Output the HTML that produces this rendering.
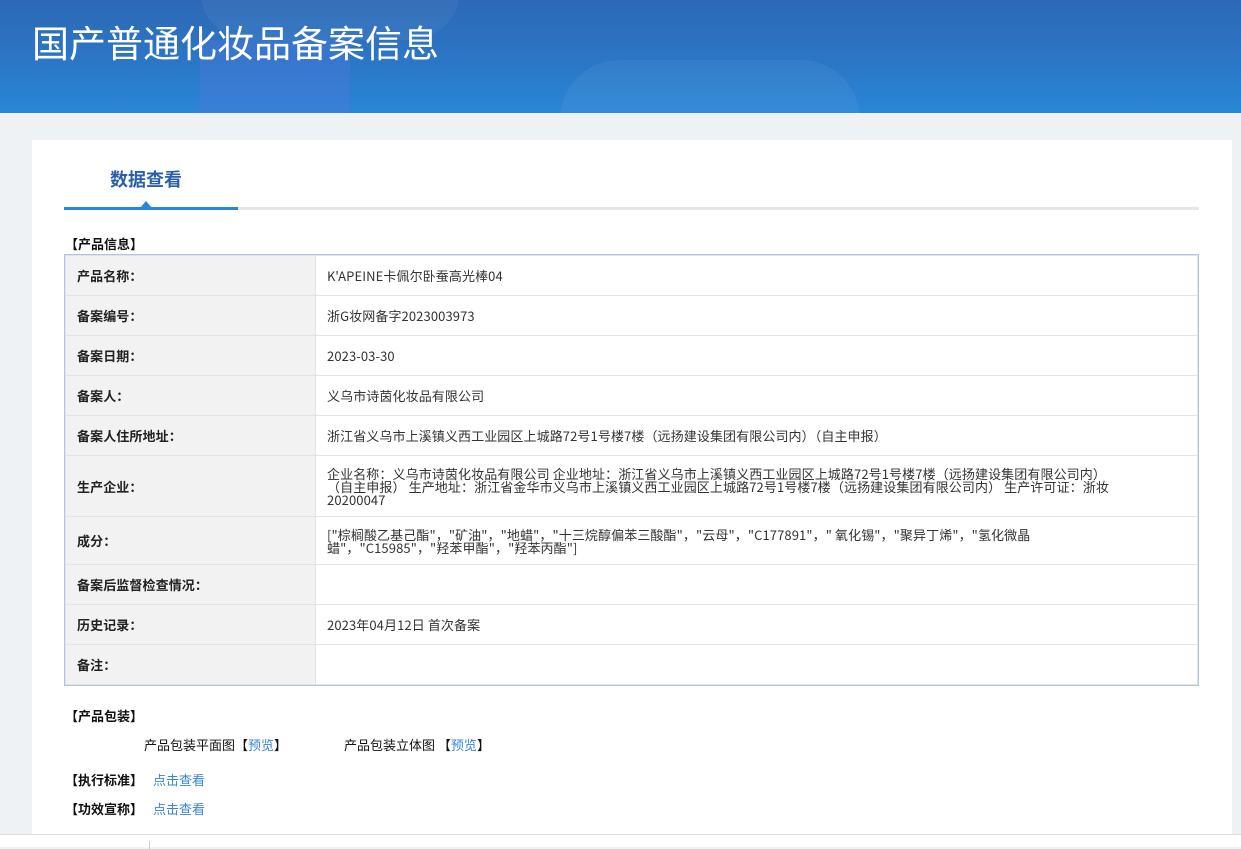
<!DOCTYPE html>
<html><head><meta charset="utf-8"><style>
*{margin:0;padding:0;box-sizing:border-box}
body{width:1241px;height:847px;overflow:hidden;background:#eff2f5;font-family:"Noto Sans CJK SC","Liberation Sans",sans-serif;color:#333;font-size:13px;position:relative}
.hd{position:absolute;left:0;top:0;width:1241px;height:113px;background:linear-gradient(180deg,#2d68b5 0%,#2b78c8 60%,#2a86d6 100%);overflow:hidden}
.hd h1{position:absolute;left:32px;top:14px;font-size:37px;font-weight:normal;color:#fff;font-family:"Noto Sans CJK SC",sans-serif}
.c1{position:absolute;left:200px;top:40px;width:150px;height:120px;background:rgba(80,120,220,.35)}
.c2{position:absolute;left:200px;top:-60px;width:260px;height:100px;border-radius:50px;background:rgba(255,255,255,.05)}
.c3{position:absolute;left:560px;top:60px;width:300px;height:120px;border-radius:60px;background:rgba(255,255,255,.05)}
.card{position:absolute;left:32px;top:140px;width:1200px;height:694px;background:#fff}
.tab{position:absolute;left:110px;top:166px;font-size:18px;font-weight:bold;color:#2a5ea8}
.line{position:absolute;left:64px;top:207px;width:1135px;height:3px;background:#e4e6e9}
.line2{position:absolute;left:64px;top:207px;width:174px;height:3px;background:#2a86d6}
.tri{position:absolute;left:140px;top:201px;width:0;height:0;border-left:6px solid transparent;border-right:6px solid transparent;border-bottom:7px solid #2a86d6}
.sec{position:absolute;left:65px;font-size:13px;font-weight:bold;color:#111}
table{position:absolute;left:65px;top:255px;width:1133px;border-collapse:collapse;outline:1px solid #a9c6ee}
td{border:1px solid #e3e3e3;height:40px;padding:0 11px;vertical-align:middle;line-height:13px;letter-spacing:0.1px}
td.l{width:250px;background:#f2f2f2;font-weight:bold;color:#222}
.b{position:absolute;font-size:13px;color:#111}
a{color:#3a84d4;text-decoration:none}
.lk{position:absolute;left:153px;font-weight:normal}
.ft{position:absolute;left:0;top:834px;width:1241px;height:13px;background:#fff;border-top:1px solid #ddd}
</style></head><body>
<div class="hd"><div class="c1"></div><div class="c2"></div><div class="c3"></div><h1>国产普通化妆品备案信息</h1></div>
<div class="card"></div>
<div class="tab">数据查看</div>
<div class="line"></div><div class="line2"></div><div class="tri"></div>
<div class="sec" style="top:234px">【产品信息】</div>
<table>
<tr><td class="l">产品名称：</td><td>K'APEINE卡佩尔卧蚕高光棒04</td></tr>
<tr><td class="l">备案编号：</td><td>浙G妆网备字2023003973</td></tr>
<tr><td class="l">备案日期：</td><td>2023-03-30</td></tr>
<tr><td class="l">备案人：</td><td>义乌市诗茵化妆品有限公司</td></tr>
<tr><td class="l">备案人住所地址：</td><td>浙江省义乌市上溪镇义西工业园区上城路72号1号楼7楼（远扬建设集团有限公司内）（自主申报）</td></tr>
<tr><td class="l" style="height:61px">生产企业：</td><td style="white-space:nowrap">企业名称：义乌市诗茵化妆品有限公司 企业地址：浙江省义乌市上溪镇义西工业园区上城路72号1号楼7楼（远扬建设集团有限公司内）<br>（自主申报） 生产地址：浙江省金华市义乌市上溪镇义西工业园区上城路72号1号楼7楼（远扬建设集团有限公司内） 生产许可证：浙妆<br>20200047</td></tr>
<tr><td class="l" style="height:48px">成分：</td><td style="white-space:nowrap">["棕榈酸乙基己酯"，"矿油"，"地蜡"，"十三烷醇偏苯三酸酯"，"云母"，"C177891"，" 氧化锡"，"聚异丁烯"，"氢化微晶<br>蜡"，"C15985"，"羟苯甲酯"，"羟苯丙酯"]</td></tr>
<tr><td class="l">备案后监督检查情况：</td><td></td></tr>
<tr><td class="l">历史记录：</td><td>2023年04月12日 首次备案</td></tr>
<tr><td class="l">备注：</td><td></td></tr>
</table>
<div class="sec" style="top:706px">【产品包装】</div>
<div class="b" style="left:144px;top:735px">产品包装平面图【<a>预览</a>】</div>
<div class="b" style="left:344px;top:735px">产品包装立体图 【<a>预览</a>】</div>
<div class="sec" style="top:770px">【执行标准】</div><a class="lk" style="top:770px">点击查看</a>
<div class="sec" style="top:799px">【功效宣称】</div><a class="lk" style="top:799px">点击查看</a>
<div class="ft"><div style="position:absolute;left:149px;top:6px;width:1px;height:8px;background:#ccc"></div></div>
</body></html>
